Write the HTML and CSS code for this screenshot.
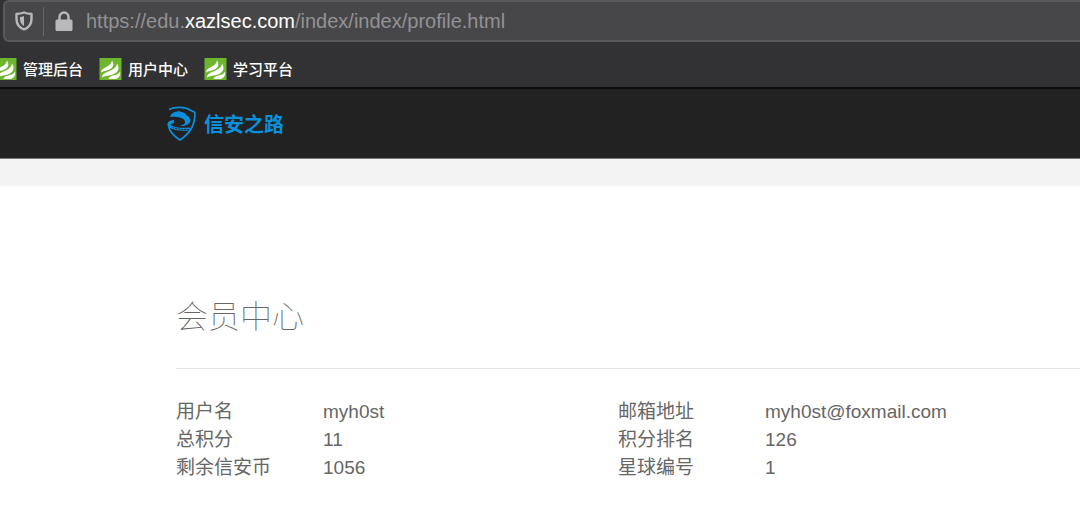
FILE: index.html
```
<!DOCTYPE html>
<html lang="zh-CN">
<head>
<meta charset="utf-8">
<title>会员中心</title>
<link rel="stylesheet" href="styles.css">
</head>
<body>
<svg class="defs" aria-hidden="true">
  <symbol id="leaf" viewBox="0 0 22 22">
    <path fill="#6fb62f" d="M0 0h22v22H0z"/>
    <path fill="#fff" d="M1.500 14.500C2 8.500 11.500 9.500 12.500 2.500c2.500 4 1.500 7-2.500 9-3.500 1.700-6 1-8.500 3z"/>
    <path fill="#fff" d="M2.500 19.500C3 12.500 16.500 14 17.500 5.500c3 4.500 1.500 8.500-3.500 10.700-4.500 1.800-8 .8-11.500 3.300z"/>
    <path fill="#fff" d="M9 21c1.500-4.500 10-3 11.500-7.500 1 4-1.500 7-5 7.500z"/>
  </symbol>
</svg>
<div class="toolbar">
  <div class="address">
    <svg class="shield" viewBox="0 0 18 20" aria-hidden="true">
      <path d="M9 1.500c2.500 1 5 1.400 7.500 1.500v5c0 5-2.500 8.500-7.500 10.500C4 16.500 1.500 13 1.500 8V3C4 2.900 6.500 2.500 9 1.500z" fill="none" stroke="#b9b9bb" stroke-width="2.400" stroke-linejoin="round"/>
      <path d="M9 5v10C6 13.300 5 11 5 8V6c1.500-.1 2.700-.4 4-1z" fill="#b9b9bb"/>
    </svg>
    <span class="divider"></span>
    <svg class="lock" viewBox="0 0 18 20" aria-hidden="true">
      <path d="M4.500 10V6a4.500 4.500 0 0 1 9 0v4" fill="none" stroke="#b9b9bb" stroke-width="2.400"/>
      <rect x="0.500" y="8.500" width="17" height="11.500" rx="1.500" fill="#b9b9bb"/>
    </svg>
    <div class="url" role="textbox" aria-label="URL" contenteditable="true" spellcheck="false">https://edu.<span class="host">xazlsec.com</span>/index/index/profile.html</div>
  </div>
  <nav class="bookmarks">
    <a href="#"><svg class="favicon" aria-hidden="true"><use href="#leaf"/></svg>管理后台</a>
    <a href="#"><svg class="favicon" aria-hidden="true"><use href="#leaf"/></svg>用户中心</a>
    <a href="#"><svg class="favicon" aria-hidden="true"><use href="#leaf"/></svg>学习平台</a>
  </nav>
</div>
<header class="site-header">
  <a class="brand" href="#">
    <svg class="emblem" viewBox="0 0 32 36" aria-hidden="true" fill="none" stroke="#0a90dc">
      <path d="M4 3.500C10 .5 20 .5 26 4.500l3.800 1.800C30.500 17 26.500 26.500 15 34 8.500 30 5 26 3.500 20.500" stroke-width="1.700"/>
      <path d="M6 8.500c2.500-2.300 4.500-3.300 7-3l1-1 1 1.200c3 .3 5 1.300 6.500 2.800h-2C24 10 25.800 12.500 25.300 15c-.8 3.500-5 5.300-11.300 5 4-.8 6.500-2.300 6-4.500-.5-2.500-4-4-8-4.500-3-.5-5-.5-7 0z" fill="#0a90dc" stroke="none"/>
      <path d="M9 15.500c-5 .5-6.500 2.800-3.500 5 3.500 2.300 10.500 3.300 19.500 2.500" stroke-width="3"/>
      <path d="M7.500 21.500c4 1.500 9 2.200 17 2" stroke="#222" stroke-width="1" stroke-dasharray="2 1"/>
    </svg>
    <span>信安之路</span>
  </a>
</header>
<main class="page">
  <section class="profile">
    <h1>会员中心</h1>
    <dl class="details">
      <div><dt>用户名</dt><dd>myh0st</dd></div>
      <div><dt>邮箱地址</dt><dd>myh0st@foxmail.com</dd></div>
      <div><dt>总积分</dt><dd>11</dd></div>
      <div><dt>积分排名</dt><dd>126</dd></div>
      <div><dt>剩余信安币</dt><dd>1056</dd></div>
      <div><dt>星球编号</dt><dd>1</dd></div>
    </dl>
  </section>
</main>
</body>
</html>
```
FILE: styles.css
```
* { box-sizing: border-box; }
body {
  margin: 0;
  background: #fff;
  color: #666;
  font-family: "Liberation Sans", "Noto Sans CJK SC", sans-serif;
  overflow-x: hidden;
}
a { color: inherit; text-decoration: none; }
.defs { position: absolute; width: 0; height: 0; }
.toolbar {
  background: #323234;
  border-bottom: 2px solid #0c0c0d;
}
.address {
  display: flex;
  align-items: center;
  height: 42px;
  margin-left: 3px;
  padding-left: 10px;
  background: #474749;
  border: 2px solid #59595b;
  border-right: 0;
  border-radius: 6px 0 0 6px;
}
.shield { width: 18px; height: 20px; }
.divider {
  width: 1px;
  height: 29px;
  margin: 0 11px 0 10px;
  background: #626870;
}
.lock { width: 18px; height: 20px; margin-right: 13px; }
.url {
  color: #929294;
  font-size: 20px;
  line-height: 28px;
  white-space: nowrap;
  outline: 0;
}
.host { color: #fff; }
.bookmarks {
  display: flex;
  gap: 16px;
  height: 45px;
  padding-top: 8px;
  margin-left: -6px;
  align-items: center;
  color: #fff;
  font-family: "Noto Sans CJK SC", sans-serif;
  font-size: 15px;
  font-weight: 500;
}
.bookmarks a { display: flex; align-items: center; gap: 6px; }
.favicon { width: 23px; height: 22px; }
.site-header {
  display: flex;
  align-items: center;
  height: 70px;
  padding-left: 165px;
  background: #222;
  border-bottom: 1px solid #777;
}
.brand {
  display: flex;
  align-items: center;
  gap: 7px;
  color: #0a90dc;
  font-family: "Noto Sans CJK SC", sans-serif;
  font-size: 20px;
  font-weight: 700;
}
.emblem { width: 32px; height: 36px; }
.page { border-top: 27px solid #f3f3f3; }
.profile { padding: 104px 0 0 176px; }
h1 {
  margin: 0;
  padding-bottom: 29px;
  border-bottom: 1px solid #e6e6e6;
  font-family: "Noto Sans CJK SC", sans-serif;
  font-size: 32px;
  font-weight: 100;
  line-height: 49px;
}
.details {
  display: grid;
  grid-template-columns: 442px 1fr;
  margin: 29px 0 0;
  font-size: 19px;
  line-height: 28px;
}
.details div { display: flex; }
dt { width: 147px; }
dd { margin: 0; }
```
